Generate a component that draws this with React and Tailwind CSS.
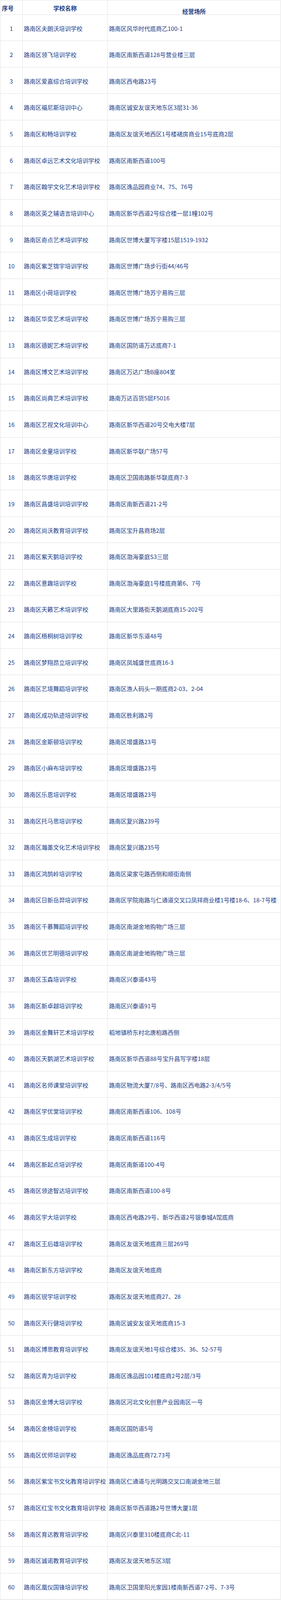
const rows = [
  ["路南区夫朗沃培训学校", "路南区风华时代底商乙100-1"],
  ["路南区领飞培训学校", "路南区南新西道128号营业楼三层"],
  ["路南区爱嘉综合培训学校", "路南区西电路23号"],
  ["路南区福尼斯培训中心", "路南区诚安友谊天地东区3层31-36"],
  ["路南区和畅培训学校", "路南区友谊天地西区1号楼裙房商业15号底商2层"],
  ["路南区卓远艺术文化培训学校", "路南区南新西道100号"],
  ["路南区翰学文化艺术培训学校", "路南区逸品园商业74、75、76号"],
  ["路南区英之辅语言培训中心", "路南区新华西道2号综合楼一层1幢102号"],
  ["路南区奇点艺术培训学校", "路南区世博大厦写字楼15层1519-1932"],
  ["路南区紫芝锦宇培训学校", "路南区世博广场步行街44/46号"],
  ["路南区小荷培训学校", "路南区世博广场苏宁易购三层"],
  ["路南区华奕艺术培训学校", "路南区世博广场苏宁易购三层"],
  ["路南区德妮艺术培训学校", "路南区国防道万达底商7-1"],
  ["路南区博文艺术培训学校", "路南区万达广场B座804室"],
  ["路南区尚典艺术培训学校", "路南万达百货5层F5016"],
  ["路南区艺视文化培训中心", "路南区新华西道20号交电大楼7层"],
  ["路南区金童培训学校", "路南区新华联广场57号"],
  ["路南区华唐培训学校", "路南区卫国南路新华联底商7-3"],
  ["路南区昌盛培训培训学校", "路南区南新西道21-2号"],
  ["路南区尚沃教育培训学校", "路南区宝升昌商场2层"],
  ["路南区紫天鹅培训学校", "路南区渤海豪庭S3三层"],
  ["路南区意趣培训学校", "路南区渤海豪庭1号楼底商第6、7号"],
  ["路南区天籁艺术培训学校", "路南区大里路街天鹅湖底商15-202号"],
  ["路南区梧桐树培训学校", "路南区新华东道48号"],
  ["路南区梦翔昂立培训学校", "路南区凤城盛世底商16-3"],
  ["路南区艺境舞蹈培训学校", "路南区渔人码头一期底商2-03、2-04"],
  ["路南区成功轨迹培训学校", "路南区胜利路2号"],
  ["路南区金斯顿培训学校", "路南区增盛路23号"],
  ["路南区小麻布培训学校", "路南区增盛路23号"],
  ["路南区乐恩培训学校", "路南区增盛路23号"],
  ["路南区托马思培训学校", "路南区复兴路239号"],
  ["路南区瀚墨文化艺术培训学校", "路南区复兴路235号"],
  ["路南区鸿鹄岭培训学校", "路南区梁家屯路西侧和顺街南侧"],
  ["路南区日新岳羿培训学校", "路南区学院南路与仁通道交叉口凤祥商业楼1号楼18-6、18-7号楼"],
  ["路南区千慕舞蹈培训学校", "路南区南湖金地购物广场三层"],
  ["路南区优艺明德培训学校", "路南区南湖金地购物广场三层"],
  ["路南区玉森培训学校", "路南区兴泰道43号"],
  ["路南区新卓越培训学校", "路南区兴泰道91号"],
  ["路南区金舞轩艺术培训学校", "稻地镇桥东村北唐柏路西侧"],
  ["路南区天鹅湖艺术培训学校", "路南区新华西道88号宝升昌写字楼18层"],
  ["路南区名师课堂培训学校", "路南区物流大厦7/8号、路南区西电路2-3/4/5号"],
  ["路南区学优堂培训学校", "路南区南新西道106、108号"],
  ["路南区生成培训学校", "路南区南新西道116号"],
  ["路南区新起点培训学校", "路南区南新道100-4号"],
  ["路南区领途智达培训学校", "路南区南新西道100-8号"],
  ["路南区学大培训学校", "路南区西电路29号、新华西道2号银泰城A馆底商"],
  ["路南区王后雄培训学校", "路南区友谊天地底商三层269号"],
  ["路南区新东方培训学校", "路南区友谊天地底商"],
  ["路南区锐学培训学校", "路南区友谊天地底商27、28"],
  ["路南区天行健培训学校", "路南区诚安友谊天地底商15-3"],
  ["路南区博思教育培训学校", "路南区友谊天地1号综合楼35、36、52-57号"],
  ["路南区青为培训学校", "路南区逸品园101楼底商2号2层/3号"],
  ["路南区金博大培训学校", "路南区河北文化创意产业园南区一号"],
  ["路南区金榜培训学校", "路南区国防道5号"],
  ["路南区优师培训学校", "路南区逸品底商72.73号"],
  ["路南区紫宝书文化教育培训学校", "路南区仁通道与光明路交叉口南湖金地三层"],
  ["路南区红宝书文化教育培训学校", "路南区新华西道路2号世博大厦1层"],
  ["路南区育达教育培训学校", "路南区兴泰里310楼底商C北-11"],
  ["路南区诚诺教育培训学校", "路南区友谊天地东区3层"],
  ["路南区凰仪国锋培训学校", "路南区卫国里阳光家园1楼南新西道7-2号、7-3号"],
];

// the page is only captured 4096px tall, so the 60 rows share 4058px:
// 67.63px each on average, laid down as a mix of 68px and 67px rows
const STEP = 4058 / 60;
const isTall = (i) => Math.floor((i + 1) * STEP) - Math.floor(i * STEP) === 68;

function Row({ n, name, place, last, tall }) {
  let cls = tall
    ? "grid h-[68px] grid-cols-[56px_218px_442px] border-b"
    : "grid h-[67px] grid-cols-[56px_218px_442px] border-b";
  cls += last ? " border-[#cfcfcf]" : " border-[#e2e2e2]";

  return (
    <div className={cls}>
      <div className="flex items-center justify-center pt-[2px]">{n}</div>
      <div className="flex items-center whitespace-nowrap border-l border-[#e2e2e2] pt-[2px] pl-[3px]">
        {name}
      </div>
      <div className="flex items-center whitespace-nowrap border-l border-[#e2e2e2] pt-[2px] pl-[3px]">
        {place}
      </div>
    </div>
  );
}

export default function App() {
  return (
    <div className="bg-white font-['Noto_Sans_CJK_SC','Noto_Sans',sans-serif] text-[15px] leading-[15px] text-[#213d85]">
      <div className="w-[718px] border-t border-r border-l border-[#e2e2e2]">
        <div className="grid h-[37px] grid-cols-[56px_218px_442px] border-b border-[#e2e2e2] font-bold">
          <div className="flex items-center pt-[3px] pl-[4px]">序号</div>
          <div className="flex items-center justify-center border-l border-[#e2e2e2] pt-[3px]">
            学校名称
          </div>
          <div className="flex items-end justify-center border-l border-[#e2e2e2] pb-[1px]">
            经营场所
          </div>
        </div>

        {rows.map(([name, place], i) => (
          <Row
            key={i}
            n={i + 1}
            name={name}
            place={place}
            last={i === rows.length - 1}
            tall={isTall(i)}
          />
        ))}
      </div>
    </div>
  );
}
